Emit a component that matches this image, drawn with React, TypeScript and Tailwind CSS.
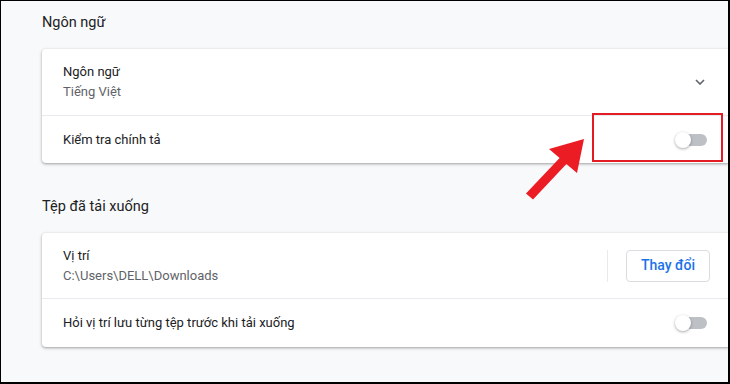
import React from 'react';

const Toggle: React.FC = () => (
    <div className="relative w-[31px] h-[12px] rounded-full bg-[#bdc1c6]">
        <div className="absolute left-[-1px] top-[-2px] w-4 h-4 rounded-full bg-white shadow-[0_1px_3px_rgba(0,0,0,0.35)]" />
    </div>
);

const App: React.FC = () => {
    return (
        <div className="relative w-[730px] h-[384px] overflow-hidden bg-[#f8f9fa] border-l border-t border-r-2 border-b-2 border-black font-['Roboto','Liberation_Sans',sans-serif] text-[#202124]">
            <div className="pl-[41px]">
                <div className="h-[48px] pt-[12px] text-[14.5px] leading-[20px]">Ngôn ngữ</div>

                <div className="bg-white rounded-l-[4px] shadow-[0_1px_2px_rgba(60,64,67,0.3),0_1px_3px_1px_rgba(60,64,67,0.15)]">
                    <div className="h-[66px] flex items-center pl-[21px] pr-[23px]">
                        <div className="flex-1 text-[13px] leading-[20px]">
                            <div>Ngôn ngữ</div>
                            <div className="text-[#5f6368]">Tiếng Việt</div>
                        </div>
                        <svg width="10" height="6" viewBox="0 0 10 6">
                            <polyline points="1,1 5,5 9,1" fill="none" stroke="#5f6368" strokeWidth="1.6" />
                        </svg>
                    </div>
                    <div className="h-px bg-[#e8eaed]" />
                    <div className="h-[47px] flex items-center pl-[21px] pr-[21px]">
                        <div className="flex-1 text-[13px] leading-[20px]">Kiểm tra chính tả</div>
                        <Toggle />
                    </div>
                </div>

                <div className="h-[70px] pt-[34px] text-[14.5px] leading-[20px]">Tệp đã tải xuống</div>

                <div className="bg-white rounded-l-[4px] shadow-[0_1px_2px_rgba(60,64,67,0.3),0_1px_3px_1px_rgba(60,64,67,0.15)]">
                    <div className="h-[65px] flex items-center pl-[21px] pr-[18px]">
                        <div className="flex-1 text-[13px] leading-[20px]">
                            <div>Vị trí</div>
                            <div className="text-[#5f6368]">C:\Users\DELL\Downloads</div>
                        </div>
                        <div className="w-px h-[32px] bg-[#e8eaed] mr-[18px]" />
                        <button className="w-[84px] h-[32px] rounded-[4px] border border-[#dadce0] bg-white text-[#1a73e8] text-[14px] font-medium">
                            Thay đổi
                        </button>
                    </div>
                    <div className="h-px bg-[#e8eaed]" />
                    <div className="h-[48px] flex items-center pl-[21px] pr-[21px]">
                        <div className="flex-1 text-[13px] leading-[20px]">Hỏi vị trí lưu từng tệp trước khi tải xuống</div>
                        <Toggle />
                    </div>
                </div>
            </div>

            {/* annotation overlay */}
            <div className="absolute left-[591px] top-[112px] w-[131px] h-[49px] border-2 border-[#e31b23]" />
            <svg className="absolute left-[519px] top-[132px]" width="72" height="72" viewBox="0 0 72 72">
                <polygon
                    points="64,6 29,16 39.6,25.1 6,60.6 13,66.4 46.4,30.9 57,40"
                    fill="#ec1c24"
                />
            </svg>
        </div>
    );
};

export default App;
